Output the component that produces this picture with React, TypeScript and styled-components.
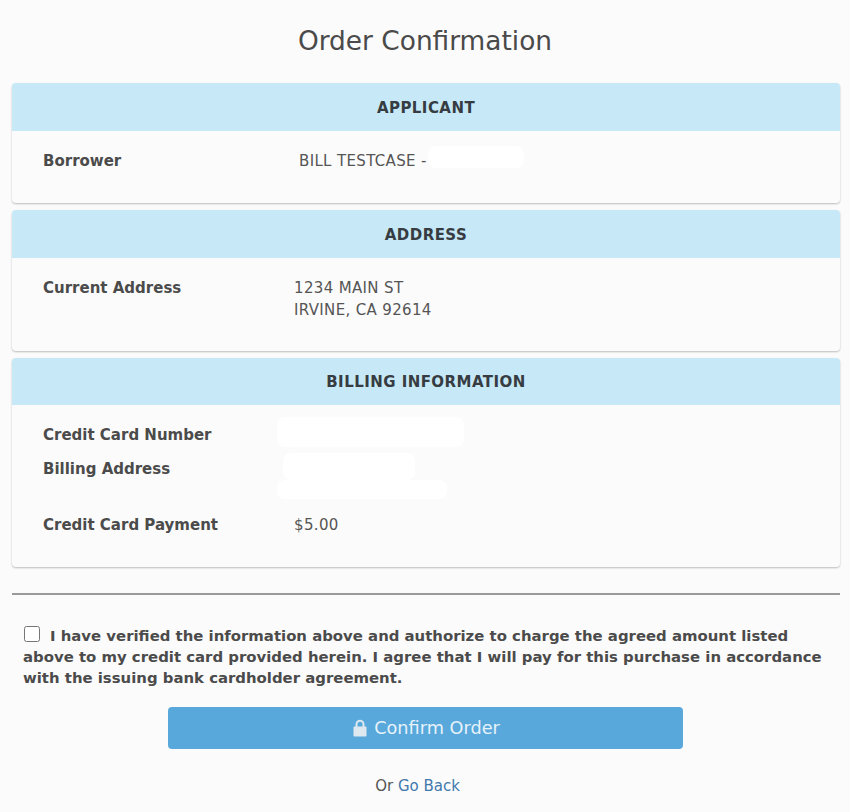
import React from 'react'
import styled, { createGlobalStyle } from 'styled-components'

const GlobalStyle = createGlobalStyle`
  html, body {
    margin: 0;
    padding: 0;
    background: #fbfbfb;
  }
  body {
    font-family: "DejaVu Sans", Verdana, sans-serif;
    font-size: 15px;
    color: #4a4a4a;
  }
`

const Page = styled.div`
  width: 850px;
  height: 812px;
  box-sizing: border-box;
  padding: 0 10px 0 12px;
  overflow: hidden;
`

const Title = styled.h1`
  margin: 0;
  height: 83px;
  padding: 24px 2px 0 0;
  box-sizing: border-box;
  font-size: 26.4px;
  line-height: 34px;
  font-weight: 400;
  text-align: center;
  color: #4a4a4a;
`

const Panel = styled.section<{ $height: number }>`
  height: ${p => p.$height}px;
  margin-bottom: 7px;
  box-sizing: border-box;
  background: #fbfbfb;
  border-radius: 4px;
  box-shadow: 0 1px 2px rgba(0, 0, 0, 0.25);
  overflow: hidden;
`

const PanelHeader = styled.h2<{ $height?: number }>`
  margin: 0;
  height: ${p => p.$height ?? 48}px;
  box-sizing: border-box;
  padding-top: 1px;
  background: #c7e9f7;
  font-size: 15px;
  letter-spacing: 0.45px;
  line-height: ${p => p.$height ?? 48}px;
  font-weight: 700;
  text-align: center;
  color: #363c42;
`

const PanelBody = styled.div<{ $top: number }>`
  display: flex;
  flex-direction: column;
  padding: ${p => p.$top}px 0 0 31px;
`

const Row = styled.div<{ $height: number; $indent?: number }>`
  display: grid;
  grid-template-columns: ${p => p.$indent ?? 251}px 1fr;
  height: ${p => p.$height}px;
  line-height: 22px;
`

const Label = styled.div`
  font-weight: 700;
  color: #4b4b4b;
`

const Value = styled.div`
  display: flex;
  flex-direction: column;
  white-space: nowrap;
  letter-spacing: 0.35px;
  color: #555;
`

const Inline = styled.div`
  display: flex;
  align-items: flex-start;
`

const Redaction = styled.div<{ $width: number; $height: number; $x?: number; $y?: number }>`
  flex: none;
  width: ${p => p.$width}px;
  height: ${p => p.$height}px;
  margin-left: ${p => p.$x ?? 0}px;
  margin-top: ${p => p.$y ?? 0}px;
  background: #fff;
  border-radius: 8px;
`

const Divider = styled.hr`
  margin: 26px 0 0;
  border: 0;
  height: 2px;
  background: #9a9a9a;
`

const Agreement = styled.label`
  display: block;
  margin: 31px 0 0 11px;
  font-weight: 700;
  font-size: 14.9px;
  line-height: 21.2px;
  white-space: nowrap;
  color: #4b4b4b;
`

const Check = styled.input`
  width: 16px;
  height: 16px;
  margin: 0 10px 0 1px;
  vertical-align: -1px;
`

const ConfirmButton = styled.button`
  display: flex;
  align-items: center;
  justify-content: center;
  gap: 7px;
  width: 515px;
  height: 42px;
  margin: 17px 0 0 156px;
  padding: 0 0 0 2px;
  border: 0;
  border-radius: 4px;
  background: #59a8db;
  color: #e6f2fa;
  font-family: inherit;
  font-size: 17.7px;
`

const BackLine = styled.p`
  margin: 26px 0 0;
  padding-right: 17px;
  line-height: 22px;
  text-align: center;
  color: #555;
`

const BackLink = styled.a`
  color: #3f79ae;
  text-decoration: none;
`

function LockIcon() {
  return (
    <svg width="14" height="18" viewBox="0 0 14 18" aria-hidden="true">
      <path d="M3.5 8V5.2a3.5 3.5 0 0 1 7 0V8" fill="none" stroke="#dde8f0" strokeWidth="2" />
      <rect x="0.5" y="7.5" width="13" height="10" rx="1" fill="#dde8f0" />
    </svg>
  )
}

export default function App() {
  return (
    <Page>
      <GlobalStyle />
      <Title>Order Confirmation</Title>

      <Panel $height={120}>
        <PanelHeader>APPLICANT</PanelHeader>
        <PanelBody $top={19}>
          <Row $height={22} $indent={256}>
            <Label>Borrower</Label>
            <Value>
              <Inline>
                BILL TESTCASE -
                <Redaction $width={96} $height={22} $x={1} $y={-4} />
              </Inline>
            </Value>
          </Row>
        </PanelBody>
      </Panel>

      <Panel $height={141}>
        <PanelHeader>ADDRESS</PanelHeader>
        <PanelBody $top={19}>
          <Row $height={44}>
            <Label>Current Address</Label>
            <Value>
              <span>1234 MAIN ST</span>
              <span>IRVINE, CA 92614</span>
            </Value>
          </Row>
        </PanelBody>
      </Panel>

      <Panel $height={209}>
        <PanelHeader $height={47}>BILLING INFORMATION</PanelHeader>
        <PanelBody $top={19}>
          <Row $height={34} $indent={234}>
            <Label>Credit Card Number</Label>
            <Value>
              <Redaction $width={187} $height={30} $y={-7} />
            </Value>
          </Row>
          <Row $height={56} $indent={234}>
            <Label>Billing Address</Label>
            <Value>
              <Redaction $width={132} $height={27} $x={6} $y={-5} />
              <Redaction $width={170} $height={19} />
            </Value>
          </Row>
          <Row $height={22}>
            <Label>Credit Card Payment</Label>
            <Value>$5.00</Value>
          </Row>
        </PanelBody>
      </Panel>

      <Divider />

      <Agreement>
        <Check type="checkbox" />
        I have verified the information above and authorize to charge the agreed amount listed
        <br />
        above to my credit card provided herein. I agree that I will pay for this purchase in accordance
        <br />
        with the issuing bank cardholder agreement.
      </Agreement>

      <ConfirmButton type="button">
        <LockIcon />
        Confirm Order
      </ConfirmButton>

      <BackLine>
        Or <BackLink href="#">Go Back</BackLink>
      </BackLine>
    </Page>
  )
}
